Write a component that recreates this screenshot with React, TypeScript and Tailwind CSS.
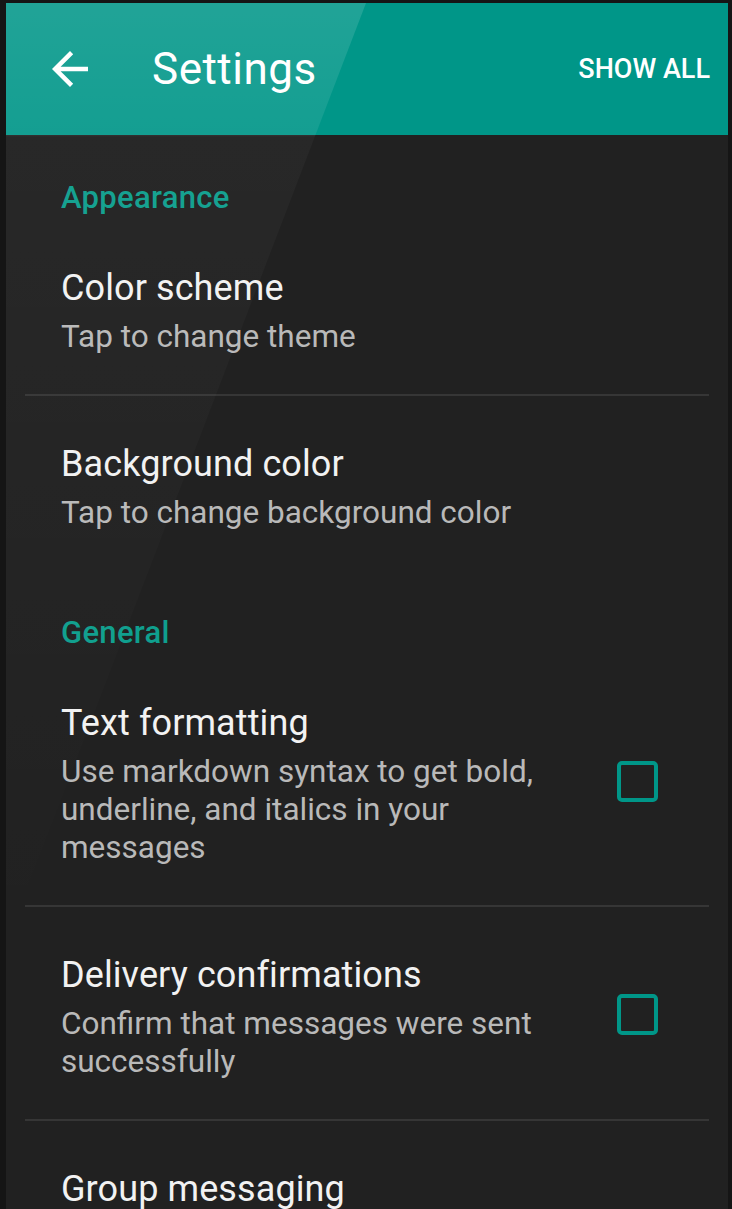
const sections = [
  {
    title: "Appearance",
    rows: [
      { title: "Color scheme", desc: "Tap to change theme" },
      { title: "Background color", desc: "Tap to change background color" },
    ],
  },
  {
    title: "General",
    rows: [
      {
        title: "Text formatting",
        desc: "Use markdown syntax to get bold, underline, and italics in your messages",
        check: true,
      },
      {
        title: "Delivery confirmations",
        desc: "Confirm that messages were sent successfully",
        check: true,
      },
      { title: "Group messaging", desc: "" },
    ],
  },
];

const Row = ({ title, desc, check, last }: { title: string; desc: string; check?: boolean; last?: boolean }) => (
  <div className={`flex items-center gap-[56px] pl-[36px] pr-[51px] pt-[46px] pb-[38px] ${last ? "" : "border-b-2 border-[#363636]"}`}>
    <div className="flex-1">
      <p className="text-[36px] leading-[44px] tracking-[0.1px] text-[#f2f2f2]">{title}</p>
      {desc && <p className="mt-[8px] text-[31.5px] leading-[38px] text-[#b9b9b9]">{desc}</p>}
    </div>
    {check && <div className="mb-[6px] h-[41px] w-[41px] rounded-[5px] border-[4px] border-[#009688]" />}
  </div>
);

export default function App() {
  return (
    <div className="h-[1209px] w-[732px] overflow-hidden bg-[#151515] pt-[3px] pl-[6px] pr-[4px] font-['Roboto',sans-serif]">
      <div className="relative h-[1206px] bg-[#212121]">
        {/* Header */}
        <header className="flex h-[132px] items-center bg-[#009688] pl-[37px] pr-[18px] text-white">
          <svg width="54" height="54" viewBox="0 0 24 24" fill="currentColor">
            <path d="M20 11H7.83l5.59-5.59L12 4l-8 8 8 8 1.41-1.41L7.83 13H20v-2z" />
          </svg>
          <h1 className="ml-[55px] flex-1 text-[44px] leading-none tracking-[0.5px]">Settings</h1>
          <span className="text-[27px] font-medium leading-none">SHOW ALL</span>
        </header>

        {/* List */}
        <div className="mx-[19px]">
          {sections.map((s) => (
            <div key={s.title}>
              <p className="pl-[36px] pt-[45px] pb-[4px] text-[31px] font-medium leading-[36px] tracking-[0.3px] text-[#0f9f8e]">{s.title}</p>
              {s.rows.map((r, i) => (
                <Row key={r.title} {...r} last={i === s.rows.length - 1} />
              ))}
            </div>
          ))}
        </div>

        {/* screen glare */}
        <div className="pointer-events-none absolute inset-0 bg-[linear-gradient(to_bottom,rgba(255,255,255,0.13)_0,rgba(255,255,255,0.08)_132px,rgba(255,255,255,0.03)_134px,rgba(255,255,255,0)_940px)] [clip-path:polygon(0_0,360px_0,0_940px)]" />
      </div>
    </div>
  );
}
